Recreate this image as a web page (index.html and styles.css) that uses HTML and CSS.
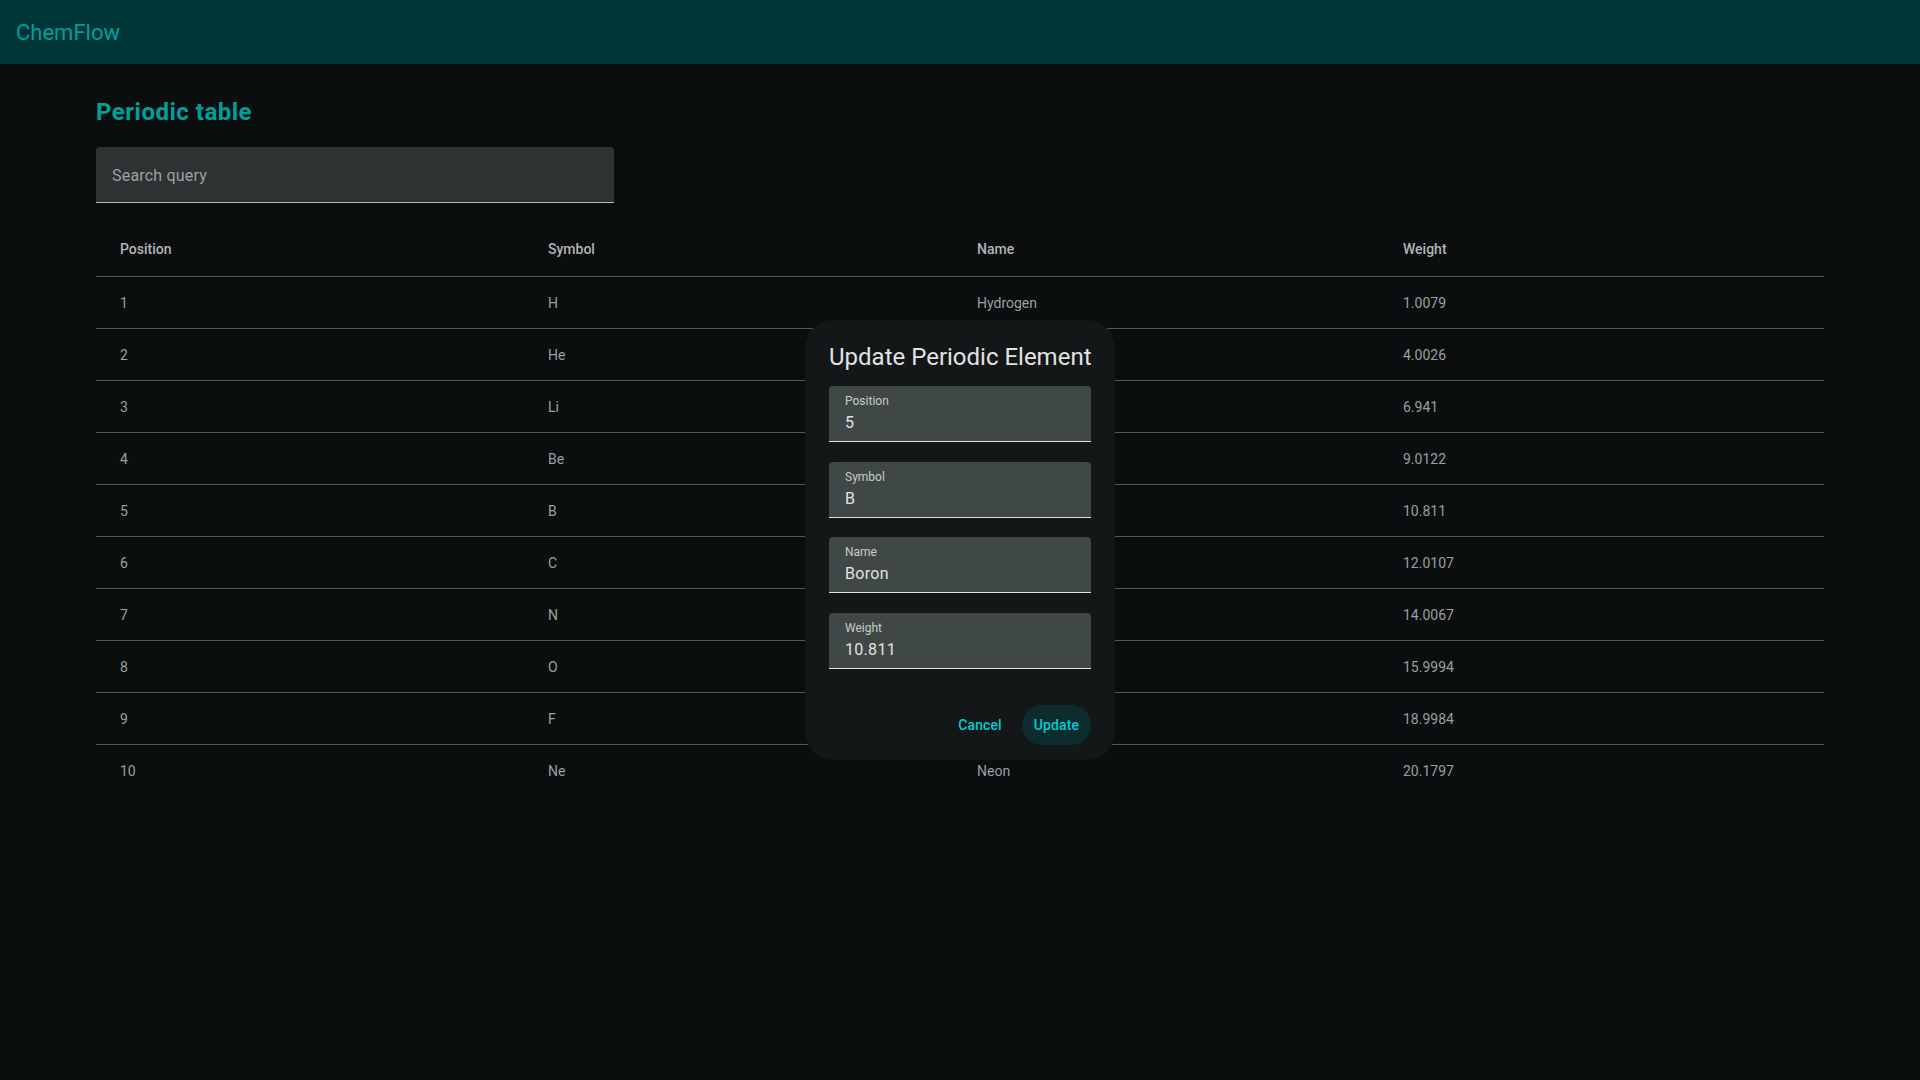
FILE: index.html
```html
<!DOCTYPE html>
<html lang="en">
<head>
<meta charset="utf-8">
<title>ChemFlow</title>
<link rel="stylesheet" href="styles.css">
</head>
<body>
<header class="toolbar">
  <span class="brand">ChemFlow</span>
</header>
<main class="content">
  <h2 class="page-title">Periodic table</h2>
  <div class="search-field">
    <span class="search-placeholder">Search query</span>
  </div>
  <div class="table">
    <div class="row head">
      <div class="cell">Position</div>
      <div class="cell">Symbol</div>
      <div class="cell">Name</div>
      <div class="cell">Weight</div>
    </div>
    <div class="row"><div class="cell">1</div><div class="cell">H</div><div class="cell">Hydrogen</div><div class="cell">1.0079</div></div>
    <div class="row"><div class="cell">2</div><div class="cell">He</div><div class="cell">Helium</div><div class="cell">4.0026</div></div>
    <div class="row"><div class="cell">3</div><div class="cell">Li</div><div class="cell">Lithium</div><div class="cell">6.941</div></div>
    <div class="row"><div class="cell">4</div><div class="cell">Be</div><div class="cell">Beryllium</div><div class="cell">9.0122</div></div>
    <div class="row"><div class="cell">5</div><div class="cell">B</div><div class="cell">Boron</div><div class="cell">10.811</div></div>
    <div class="row"><div class="cell">6</div><div class="cell">C</div><div class="cell">Carbon</div><div class="cell">12.0107</div></div>
    <div class="row"><div class="cell">7</div><div class="cell">N</div><div class="cell">Nitrogen</div><div class="cell">14.0067</div></div>
    <div class="row"><div class="cell">8</div><div class="cell">O</div><div class="cell">Oxygen</div><div class="cell">15.9994</div></div>
    <div class="row"><div class="cell">9</div><div class="cell">F</div><div class="cell">Fluorine</div><div class="cell">18.9984</div></div>
    <div class="row last"><div class="cell">10</div><div class="cell">Ne</div><div class="cell">Neon</div><div class="cell">20.1797</div></div>
  </div>
</main>

<div class="overlay">
  <div class="dialog">
    <h3 class="dialog-title">Update Periodic Element</h3>
    <div class="field">
      <span class="field-label">Position</span>
      <span class="field-value">5</span>
    </div>
    <div class="field">
      <span class="field-label">Symbol</span>
      <span class="field-value">B</span>
    </div>
    <div class="field">
      <span class="field-label">Name</span>
      <span class="field-value">Boron</span>
    </div>
    <div class="field">
      <span class="field-label">Weight</span>
      <span class="field-value">10.811</span>
    </div>
    <div class="actions">
      <button class="btn">Cancel</button>
      <button class="btn btn-tonal">Update</button>
    </div>
  </div>
</div>
</body>
</html>
```

FILE: styles.css
```css
* { box-sizing: border-box; }

html, body {
  margin: 0;
  padding: 0;
  height: 100%;
}

body {
  background: #0b0e0f;
  font-family: Roboto, "Noto Sans", sans-serif;
  color: #e0e3e3;
}

.toolbar {
  height: 64px;
  background: #003538;
  display: flex;
  align-items: center;
  padding: 0 16px;
}

.brand {
  font-size: 22px;
  font-weight: 400;
  color: #00a09a;
  letter-spacing: 0;
}

.content {
  padding: 0 96px;
}

.page-title {
  margin: 32px 0 19px;
  font-size: 24px;
  line-height: 32px;
  font-weight: 700;
  color: #00a09a;
  letter-spacing: 0.5px;
}

.search-field {
  width: 518px;
  height: 56px;
  background: #2d3233;
  border-radius: 4px 4px 0 0;
  border-bottom: 1px solid #b9bcbc;
  display: flex;
  align-items: center;
  padding: 2px 16px 0;
}

.search-placeholder {
  font-size: 16px;
  color: #9da1a1;
  letter-spacing: 0.2px;
}

.table {
  margin-top: 18px;
}

.row {
  display: grid;
  grid-template-columns: 452px 429px 426px 1fr;
  height: 52px;
  align-items: center;
  border-bottom: 1px solid #55595a;
  font-size: 14px;
  color: #9c9fa0;
}

.row.head {
  height: 56px;
  font-weight: 500;
  color: #b2b4b5;
}

.row.last {
  border-bottom: none;
}

.row .cell:first-child {
  padding-left: 24px;
}

.row .cell:last-child {
  padding-right: 24px;
}

.overlay {
  position: fixed;
  inset: 0;
  display: flex;
  align-items: center;
  justify-content: center;
}

.dialog {
  width: 310px;
  height: 440px;
  background: #131718;
  border-radius: 28px;
  padding: 21px 24px 15px;
  display: flex;
  flex-direction: column;
}

.dialog-title {
  margin: 0 0 13px;
  font-size: 24px;
  line-height: 32px;
  font-weight: 400;
  color: #e1e3e3;
  white-space: nowrap;
}

.field {
  height: 56px;
  background: #3f4847;
  border-radius: 4px 4px 0 0;
  border-bottom: 1px solid #e1e3e3;
  padding: 7px 16px 0;
  margin-bottom: 19.5px;
  display: flex;
  flex-direction: column;
}

.field-label {
  font-size: 12px;
  line-height: 16px;
  color: #c9cccb;
}

.field-value {
  margin-top: 2px;
  font-size: 16px;
  line-height: 24px;
  color: #e1e3e3;
  letter-spacing: 0.3px;
}

.actions {
  margin-top: auto;
  display: flex;
  justify-content: flex-end;
  gap: 8px;
}

.btn {
  height: 40px;
  border: none;
  border-radius: 20px;
  background: transparent;
  padding: 0 12px;
  font-family: Roboto, sans-serif;
  font-size: 14px;
  font-weight: 500;
  color: #00cdd0;
  letter-spacing: 0.1px;
}

.btn-tonal {
  background: #0c2c2e;
}
```
